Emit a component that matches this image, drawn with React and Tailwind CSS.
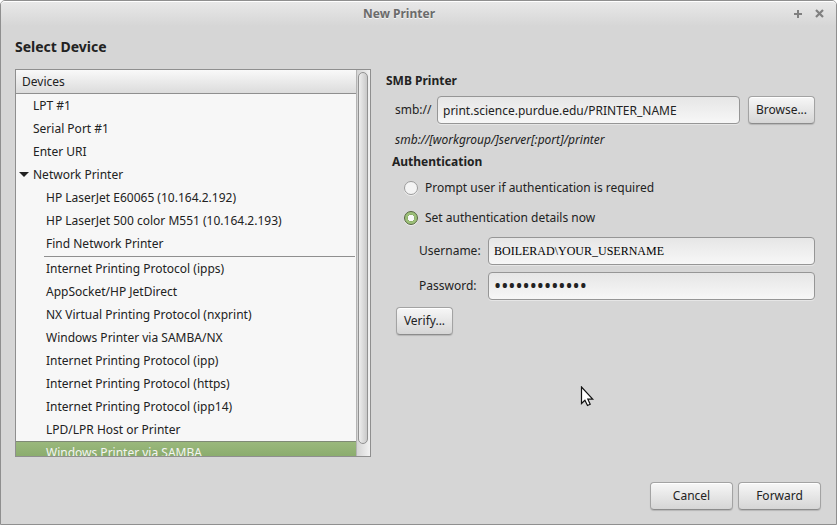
import React, { useState } from 'react';
import clsx from 'clsx';

const topDevices = ["LPT #1", "Serial Port #1", "Enter URI"];

const foundPrinters = [
  "HP LaserJet E60065 (10.164.2.192)",
  "HP LaserJet 500 color M551 (10.164.2.193)",
  "Find Network Printer",
];

const protocols = [
  "Internet Printing Protocol (ipps)",
  "AppSocket/HP JetDirect",
  "NX Virtual Printing Protocol (nxprint)",
  "Windows Printer via SAMBA/NX",
  "Internet Printing Protocol (ipp)",
  "Internet Printing Protocol (https)",
  "Internet Printing Protocol (ipp14)",
  "LPD/LPR Host or Printer",
  "Windows Printer via SAMBA",
];

const Button = ({ className, children, ...props }) => (
  <button
    type="button"
    className={clsx(
      "h-7 rounded-[4px] border border-[#a3a3a3] border-b-[#8c8c8c] bg-linear-to-b from-[#f7f7f7] to-[#d6d6d6] text-center shadow-[0_1px_1px_rgba(0,0,0,0.15),inset_0_1px_0_#ffffff]",
      className
    )}
    {...props}
  >
    {children}
  </button>
);

const TextField = ({ className, ...props }) => (
  <input
    className={clsx(
      "h-7 min-w-0 flex-1 rounded-[4px] border border-[#969696] bg-linear-to-b from-[#e6e6e6] to-[#f7f7f7] px-[5px] shadow-[0_1px_0_#e6e6e6] outline-none",
      className
    )}
    {...props}
  />
);

const Radio = ({ label, ...props }) => (
  <label className="flex h-[30px] items-center gap-[7px]">
    <input
      type="radio"
      name="auth"
      className="h-3.5 w-3.5 appearance-none rounded-full border border-[#9a9a9a] bg-[#f4f4f4] shadow-[0_1px_0_#eeeeee] checked:border-[#55643f] checked:bg-[radial-gradient(circle,#f9f9f9_0px,#f9f9f9_3px,#7c9661_3px,#9dc179_4px,#9dc179_7px)]"
      {...props}
    />
    {label}
  </label>
);

const DeviceRow = ({ name, nested, selected, onSelect }) => (
  <li
    role="treeitem"
    aria-selected={selected}
    onClick={() => onSelect(name)}
    className={clsx(
      "h-[23px] shrink-0 truncate",
      nested ? "pl-[30px]" : "pl-[17px]",
      selected
        ? "border-t border-[#7f8a75] bg-linear-to-b from-[#9ab87c] to-[#83a666] leading-[21px] text-[#f4f4f4]"
        : "leading-[23px]"
    )}
  >
    {name}
  </li>
);

const TitleBar = () => (
  <header className="flex h-[25px] shrink-0 items-center rounded-t-[4px] border-t border-white bg-linear-to-b from-[#e8e8e8] to-[#d6d6d6] pl-1 pr-3">
    <h1 className="flex-1 text-center font-bold text-[#6b6b6b] [text-shadow:0_1px_0_#f4f4f4]">New Printer</h1>
    <div className="flex gap-[13px] pb-0.5 text-[#808080]">
      <button type="button" aria-label="Maximize">
        <svg width="9" height="9" viewBox="0 0 9 9" fill="none" stroke="currentColor" strokeWidth="2">
          <path d="M5 1v8M1 5h8" />
        </svg>
      </button>
      <button type="button" aria-label="Close">
        <svg width="9" height="9" viewBox="0 0 9 9" fill="none" stroke="currentColor" strokeWidth="2.2">
          <path d="M1 1l7 7M8 1L1 8" />
        </svg>
      </button>
    </div>
  </header>
);

const DeviceTree = () => {
  const [selected, setSelected] = useState("Windows Printer via SAMBA");
  const row = (name, nested) => (
    <DeviceRow key={name} name={name} nested={nested} selected={selected === name} onSelect={setSelected} />
  );

  return (
    <section className="flex min-h-0 border border-[#8f8f8f] bg-[#f7f7f7]">
      <div className="flex min-w-0 flex-1 flex-col overflow-hidden">
        <h3 className="h-6 shrink-0 border-b border-[#8f8f8f] bg-linear-to-b from-[#f9f9f9] to-[#dcdcdc] px-1.5 leading-[23px]">
          Devices
        </h3>
        <ul role="tree" aria-label="Devices" className="flex min-h-0 flex-1 flex-col overflow-hidden">
          {topDevices.map((name) => row(name, false))}
          <li role="treeitem" aria-expanded="true" className="flex h-[23px] shrink-0 items-center gap-1 pl-[3px]">
            <svg width="10" height="5" viewBox="0 0 10 5" fill="#222222" aria-hidden="true">
              <path d="M0 0h10L5 5z" />
            </svg>
            Network Printer
          </li>
          {foundPrinters.map((name) => row(name, true))}
          <li role="separator" className="ml-7 mr-px mt-px h-px shrink-0 bg-[#8f8f8f]" />
          {protocols.map((name) => row(name, true))}
        </ul>
      </div>
      <div className="flex w-3.5 flex-col border-l border-[#b4b4b4] bg-linear-to-r from-[#d4d4d4] to-[#f2f2f2] pb-3 pl-px pr-0.5 pt-0.5">
        <div className="flex-1 rounded-full border border-[#929292] bg-linear-to-r from-[#eeeeee] to-[#c9c9c9]" />
      </div>
    </section>
  );
};

const SmbForm = () => {
  const [mode, setMode] = useState("now");

  return (
    <form className="flex flex-col pr-1.5">
      <h3 className="pt-0.5 font-bold leading-5">SMB Printer</h3>
      <div className="mt-[5px] flex items-center pl-[9px]">
        <label htmlFor="uri" className="w-[42px]">smb://</label>
        <TextField id="uri" defaultValue="print.science.purdue.edu/PRINTER_NAME" />
        <Button className="ml-2 w-[67px]">Browse...</Button>
      </div>
      <p className="mt-1 pl-[9px] italic leading-6">smb://[workgroup/]server[:port]/printer</p>
      <h3 className="pl-1.5 font-bold leading-5">Authentication</h3>
      <div className="mt-px flex flex-col pl-[18px]">
        <Radio label="Prompt user if authentication is required" checked={mode === "prompt"} onChange={() => setMode("prompt")} />
        <Radio label="Set authentication details now" checked={mode === "now"} onChange={() => setMode("now")} />
      </div>
      <div className="mt-1 flex flex-col gap-[7px] pl-[33px]">
        <div className="flex items-center">
          <label htmlFor="username" className="w-[69px]">Username:</label>
          <TextField id="username" className="font-['Liberation_Serif',serif] text-black" defaultValue="BOILERAD\YOUR_USERNAME" />
        </div>
        <div className="flex items-center">
          <label htmlFor="password" className="w-[69px]">Password:</label>
          <TextField id="password" type="password" className="text-[19px]" defaultValue="printpassword" />
        </div>
      </div>
      <div className="mt-[7px] pl-[10px]">
        <Button className="w-[57px]">Verify...</Button>
      </div>
    </form>
  );
};

const Pointer = () => (
  <svg className="pointer-events-none absolute left-[579px] top-[385px]" width="15" height="22" viewBox="0 0 15 22" aria-hidden="true">
    <path d="M1.5 1v16.5l3.4-3.2 2.6 5.2 2.7-1.2-2.4-5.1h4.9z" fill="#ffffff" stroke="#111111" strokeWidth="1.2" />
  </svg>
);

export default function App() {
  return (
    <div className="h-screen bg-white font-['Noto_Sans',sans-serif] text-[12px] leading-4 text-[#222222]">
      <div className="relative flex h-full flex-col rounded-t-[5px] border border-[#8f8f8f] bg-[#d6d6d6]">
        <TitleBar />
        <main className="flex min-h-0 flex-1 flex-col pb-3.5 pl-3.5 pr-[15px]">
          <h2 className="pb-3 pt-[11px] text-[14px] font-bold leading-5">Select Device</h2>
          <div className="grid min-h-0 flex-1 grid-cols-[356px_1fr] gap-[15px]">
            <DeviceTree />
            <SmbForm />
          </div>
          <footer className="mt-[25px] flex justify-end gap-[5px]">
            <Button className="w-[83px]">Cancel</Button>
            <Button className="w-[83px]">Forward</Button>
          </footer>
        </main>
        <Pointer />
      </div>
    </div>
  );
}
